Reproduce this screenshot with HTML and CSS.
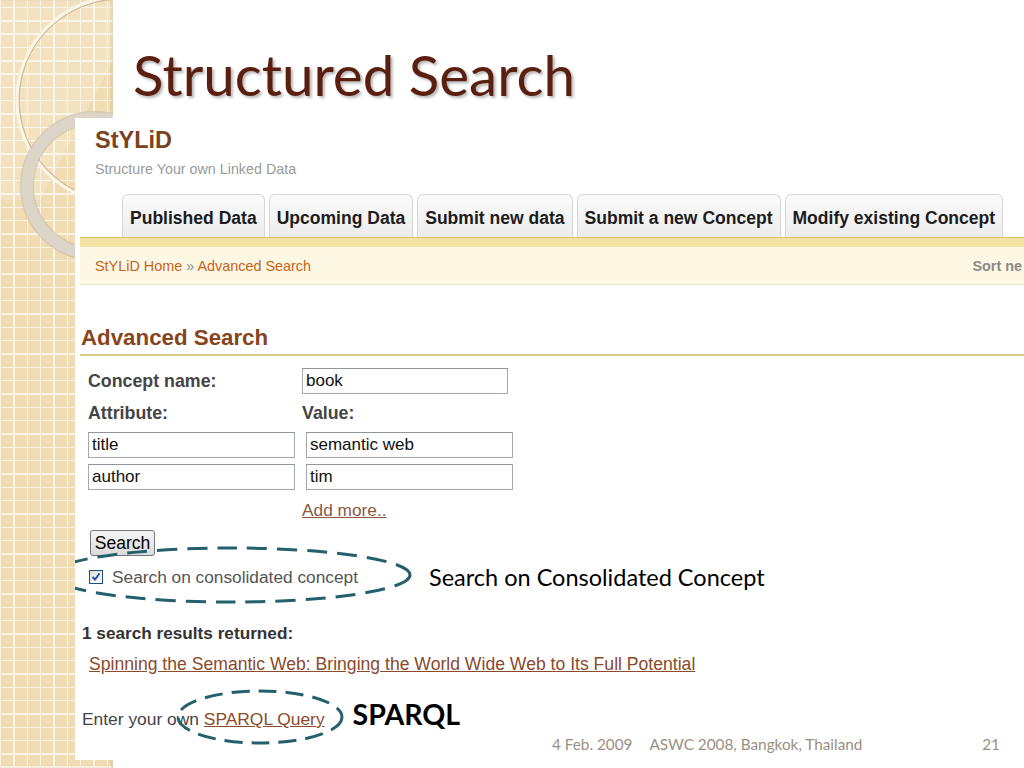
FILE: index.html
```html
<!DOCTYPE html>
<html>
<head>
  <meta charset="utf-8">
  <link rel="stylesheet" href="styles.css">
</head>
<body>
  <div class="slide">
    <div class="strip">
      <svg class="rings" width="113" height="768" viewBox="0 0 113 768">
        <path d="M113 0 L113 60 L40 200 L0 200 L0 0 Z" fill="#ffffff" opacity="0.18"/>
        <circle cx="120" cy="100" r="101" fill="none" stroke="#bfa77e" stroke-width="1.5" opacity="0.7"/>
        <circle cx="120" cy="100" r="103" fill="none" stroke="#fbf5e8" stroke-width="3"/>
        <circle cx="95" cy="186" r="68" fill="none" stroke="#c4baa8" stroke-width="14" opacity="0.6"/>
        <circle cx="95" cy="186" r="68" fill="none" stroke="#dcd5c8" stroke-width="11"/>
      </svg>
    </div>

    <div class="title-area">
      <h1 class="title">Structured Search</h1>
    </div>

    <div class="shot">
      <header class="site-head">
        <div class="logo">StYLiD</div>
        <div class="tagline">Structure Your own Linked Data</div>
      </header>

      <nav class="tabs">
        <span class="tab">Published Data</span>
        <span class="tab">Upcoming Data</span>
        <span class="tab">Submit new data</span>
        <span class="tab">Submit a new Concept</span>
        <span class="tab">Modify existing Concept</span>
      </nav>
      <div class="tab-rule"></div>

      <div class="crumbs">
        <span class="crumb-path"><a href="#">StYLiD Home</a> <span class="sep">&raquo;</span> <a href="#">Advanced Search</a></span>
        <span class="sort">Sort ne</span>
      </div>

      <h2 class="section-title">Advanced Search</h2>

      <form class="search-form">
        <div class="form-grid">
          <label class="field-label">Concept name:</label>
          <input class="field concept" type="text" value="book">

          <label class="field-label">Attribute:</label>
          <label class="field-label">Value:</label>

          <input class="field" type="text" value="title">
          <input class="field shifted" type="text" value="semantic web">

          <input class="field" type="text" value="author">
          <input class="field shifted" type="text" value="tim">

          <span></span>
          <a class="add-more" href="#">Add more..</a>
        </div>

        <button type="button" class="search-btn">Search</button>

        <div class="check-row">
          <span class="check-label">
            <span class="checkbox">
              <svg width="10" height="10" viewBox="0 0 10 10"><path d="M1.5 5 L4 7.5 L8.5 1.5" fill="none" stroke="#2a4fa8" stroke-width="2"/></svg>
            </span>
            Search on consolidated concept
          </span>
          <span class="callout">Search on Consolidated Concept</span>
          <svg class="ring-mark wide" width="362" height="58" viewBox="0 0 362 58">
            <ellipse cx="181" cy="29" rx="179" ry="27" fill="none" stroke="#245f6c" stroke-width="3" stroke-dasharray="20 10"/>
          </svg>
        </div>
      </form>

      <p class="results-count">1 search results returned:</p>
      <a class="result" href="#">Spinning the Semantic Web: Bringing the World Wide Web to Its Full Potential</a>

      <div class="sparql-row">
        <span class="plain">Enter your own <a href="#">SPARQL Query</a></span>
        <span class="callout strong">SPARQL</span>
        <svg class="ring-mark small" width="168" height="56" viewBox="0 0 168 56">
          <ellipse cx="84" cy="28" rx="82" ry="26" fill="none" stroke="#245f6c" stroke-width="3" stroke-dasharray="18 9"/>
        </svg>
      </div>
    </div>

    <footer class="slide-footer">
      <span class="date">4 Feb. 2009</span>
      <span class="venue">ASWC 2008, Bangkok, Thailand</span>
      <span class="page">21</span>
    </footer>
  </div>
</body>
</html>
```

FILE: styles.css
```css
body {
  margin: 0;
  background: #ffffff;
}

.slide {
  width: 1024px;
  height: 768px;
  overflow: hidden;
  display: grid;
  grid-template-columns: 75px 38px 1fr;
  grid-template-rows: 118px 642px 8px;
  background: #ffffff;
}

/* left beige grid paper */
.strip {
  grid-column: 1 / 3;
  grid-row: 1 / 4;
  overflow: hidden;
  background-color: #efdcb3;
  background-image:
    repeating-linear-gradient(90deg, #faf3e3 0, #faf3e3 1.5px, transparent 1.5px, transparent 13.33px),
    repeating-linear-gradient(0deg, #faf3e3 0, #faf3e3 1.5px, transparent 1.5px, transparent 13.33px);
  box-shadow: inset -2px 0 3px rgba(120, 100, 70, 0.15);
}

.rings {
  display: block;
}

.title-area {
  grid-column: 3;
  grid-row: 1;
  padding: 46px 0 0 20px;
}

.title {
  margin: 0;
  font-family: Lato, "Open Sans", sans-serif;
  font-weight: normal;
  font-size: 56.5px;
  line-height: 1;
  color: #5b1f10;
  text-shadow: 2px 2px 3px rgba(0, 0, 0, 0.3);
  white-space: nowrap;
}

/* the pasted screenshot */
.shot {
  grid-column: 2 / 4;
  grid-row: 2;
  z-index: 1;
  background: #ffffff;
  padding-left: 5px;
  overflow: hidden;
  font-family: "Liberation Sans", Arial, sans-serif;
}

.site-head {
  padding: 9px 0 0 15px;
}

.logo {
  font-size: 23.5px;
  line-height: 26px;
  font-weight: bold;
  color: #7a4320;
}

.tagline {
  margin-top: 8px;
  font-size: 14.3px;
  line-height: 16px;
  color: #9a9a9a;
}

.tabs {
  display: flex;
  gap: 4px;
  margin-top: 17px;
  padding-left: 42px;
  height: 43px;
}

.tab {
  display: flex;
  align-items: center;
  padding: 4px 7px 0;
  border: 1px solid #d6d6d6;
  border-bottom: none;
  border-radius: 6px 6px 0 0;
  background: linear-gradient(#fbfbfb, #ececec);
  font-size: 17.55px;
  font-weight: bold;
  color: #1c1c1c;
  white-space: nowrap;
}

.tab-rule {
  height: 10px;
  box-sizing: border-box;
  border-top: 1px solid #dcc26a;
  background: #f3e3a3;
}

.crumbs {
  display: flex;
  height: 38px;
  box-sizing: border-box;
  padding: 1px 0 0 15px;
  line-height: 37px;
  background: #fdf8e3;
  border-bottom: 1px solid #efe5c2;
  font-size: 14.4px;
}

.crumb-path {
  flex: 1;
}

.crumb-path a {
  color: #c8621c;
  text-decoration: none;
}

.sep {
  color: #8a8a8a;
}

.sort {
  padding-right: 2px;
  white-space: nowrap;
  color: #8a8a8a;
  font-weight: bold;
}

.section-title {
  margin: 41px 0 0;
  padding: 0 0 4px 1px;
  border-bottom: 2px solid #dccb86;
  font-size: 22.3px;
  line-height: 24px;
  color: #86451c;
}

.search-form {
  margin: 12px 0 0;
  padding-left: 8px;
}

.form-grid {
  display: grid;
  grid-template-columns: 214px 212px;
  grid-auto-rows: 26px;
  row-gap: 6px;
}

.field-label {
  font-size: 17.8px;
  line-height: 26px;
  font-weight: bold;
  color: #454545;
}

.field {
  width: 207px;
  height: 26px;
  box-sizing: border-box;
  margin: 0;
  padding: 0 3px;
  border: 1px solid #a3a9af;
  border-top-color: #8e959b;
  font-family: "Liberation Sans", Arial, sans-serif;
  font-size: 17px;
  color: #111;
  background: #ffffff;
}

.field.concept {
  width: 206px;
}

.field.shifted {
  margin-left: 4px;
}

.add-more {
  padding-top: 3px;
  font-size: 17.3px;
  line-height: 22px;
  color: #8a5a42;
}

.search-btn {
  display: block;
  margin: 8px 0 0 2px;
  width: 65px;
  height: 26px;
  padding: 0;
  border: 1px solid #767676;
  border-radius: 3px;
  background: linear-gradient(#f6f6f6, #dadada);
  font-family: "Liberation Sans", Arial, sans-serif;
  font-size: 17.5px;
  color: #000;
}

.check-row {
  position: relative;
  display: flex;
  align-items: center;
  margin-top: 10px;
  height: 22px;
}

.check-label {
  display: flex;
  align-items: center;
  gap: 9px;
  width: 340px;
  padding-left: 1px;
  font-size: 17.3px;
  color: #555;
  white-space: nowrap;
}

.checkbox {
  display: flex;
  align-items: center;
  justify-content: center;
  width: 14px;
  height: 14px;
  box-sizing: border-box;
  border: 1px solid #1f4f86;
  background: linear-gradient(135deg, #dcdcd6, #ffffff);
}

.callout {
  font-family: Lato, "Open Sans", sans-serif;
  font-size: 23.5px;
  color: #000;
  white-space: nowrap;
}

.callout.strong {
  position: relative;
  top: -5px;
  margin-left: 28px;
  font-size: 28.5px;
  font-weight: bold;
  line-height: 29px;
}

.ring-mark {
  position: absolute;
}

.ring-mark.wide {
  left: -38px;
  top: -20px;
}

.ring-mark.small {
  left: 96px;
  top: -19px;
}

.results-count {
  margin: 35px 0 0;
  padding-left: 2px;
  font-size: 17.2px;
  line-height: 20px;
  font-weight: bold;
  color: #333;
}

.result {
  display: block;
  margin-top: 10px;
  padding-left: 9px;
  font-size: 17.6px;
  line-height: 22px;
  color: #8a4a2c;
}

.sparql-row {
  position: relative;
  display: flex;
  align-items: center;
  margin-top: 33px;
  padding-left: 2px;
  height: 22px;
}

.plain {
  font-size: 17.4px;
  line-height: 22px;
  color: #444;
  white-space: nowrap;
}

.plain a {
  color: #8a4a2c;
}

/* slide footer sits over the screenshot */
.slide-footer {
  grid-column: 3;
  grid-row: 2;
  z-index: 2;
  align-self: end;
  display: flex;
  margin-bottom: 6px;
  padding: 0 24px 0 439px;
  font-family: Lato, "Open Sans", sans-serif;
  font-size: 15.3px;
  line-height: 20px;
  color: #9a8f80;
}

.venue {
  margin-left: 17px;
}

.page {
  margin-left: auto;
}
```
